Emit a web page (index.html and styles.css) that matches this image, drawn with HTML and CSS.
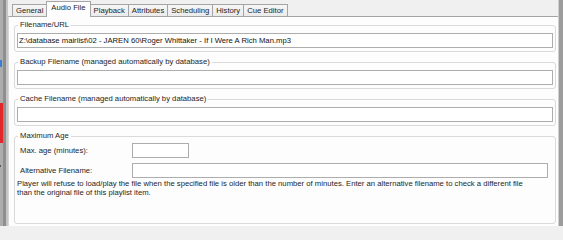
FILE: index.html
```html
<!DOCTYPE html>
<html>
<head>
<meta charset="utf-8">
<link rel="stylesheet" href="styles.css">
</head>
<body>
<div class="window">
  <div class="edge-left">
    <div class="strip">
      <div class="blue"></div>
      <div class="red"></div>
      <div class="tick"></div>
    </div>
    <div class="bar-dark"></div>
    <div class="bar-light"></div>
  </div>
  <div class="main">
    <div class="tabs">
      <div class="tab">General</div>
      <div class="tab active">Audio File</div>
      <div class="tab">Playback</div>
      <div class="tab">Attributes</div>
      <div class="tab">Scheduling</div>
      <div class="tab">History</div>
      <div class="tab">Cue Editor</div>
    </div>
    <div class="page">
      <fieldset class="group">
        <legend>Filename/URL</legend>
        <div class="input wide">Z:\database mairlist\02 - JAREN 60\Roger Whittaker - If I Were A Rich Man.mp3</div>
      </fieldset>
      <fieldset class="group">
        <legend>Backup Filename (managed automatically by database)</legend>
        <div class="input wide"></div>
      </fieldset>
      <fieldset class="group">
        <legend>Cache Filename (managed automatically by database)</legend>
        <div class="input wide"></div>
      </fieldset>
      <fieldset class="group grow">
        <legend>Maximum Age</legend>
        <div class="row first">
          <span class="label">Max. age (minutes):</span>
          <div class="input short"></div>
        </div>
        <div class="row">
          <span class="label">Alternative Filename:</span>
          <div class="input alt"></div>
        </div>
        <p class="note">Player will refuse to load/play the file when the specified file is older than the number of minutes. Enter an alternative filename to check a different file than the original file of this playlist item.</p>
      </fieldset>
    </div>
  </div>
  <div class="edge-right"></div>
</div>
</body>
</html>
```

FILE: styles.css
```css
* { box-sizing: border-box; }

html, body {
  margin: 0;
  padding: 0;
  width: 563px;
  height: 226px;
  overflow: hidden;
  background: #f0f0f0;
  font-family: "Liberation Sans", Arial, sans-serif;
  font-size: 7.7px;
  color: #1e1e1e;
}

.window {
  display: flex;
  height: 226px;
}

/* left window edge */
.edge-left {
  display: flex;
  width: 8px;
  flex: none;
}
.strip {
  width: 3px;
  background: #adadad;
  display: flex;
  flex-direction: column;
}
.blue {
  margin-top: 60px;
  height: 7px;
  width: 2px;
  background: #3a7fd5;
}
.red {
  margin-top: 36px;
  height: 40px;
  background: #e3262a;
}
.tick {
  margin-top: 22px;
  height: 2px;
  width: 1px;
  background: #555;
}
.bar-dark {
  width: 3px;
  background: #8f8f8f;
}
.bar-light {
  width: 2px;
  background: #c6c6c6;
}

.edge-right {
  width: 5px;
  flex: none;
  background: #9c9c9c;
  border-left: 1px solid #cfcfcf;
}

.main {
  flex: 1;
  display: flex;
  flex-direction: column;
  min-width: 0;
}

/* tabs */
.tabs {
  height: 16px;
  display: flex;
  align-items: flex-end;
  padding-left: 5px;
  flex: none;
}
.tab {
  height: 12px;
  line-height: 11px;
  padding: 0 3px;
  border: 1px solid #a5a5a5;
  border-bottom: none;
  margin-left: -1px;
  background: linear-gradient(#f6f6f6, #ebebeb);
  white-space: nowrap;
}
.tab.active {
  height: 16px;
  line-height: 12px;
  padding: 0 4px;
  margin-bottom: -1px;
  background: #fdfdfd;
  position: relative;
  z-index: 1;
}

/* page */
.page {
  flex: 1;
  background: #fdfdfd;
  border-top: 1px solid #a5a5a5;
  border-left: 1px solid #d6d6d6;
  padding: 0 2px 2px 5px;
  display: flex;
  flex-direction: column;
}

.group {
  margin: 5px 0 0 0;
  padding: 3px 2px 3px 2px;
  border: 1px solid #dadada;
  border-radius: 3px;
  min-width: 0;
}
.page .group:first-child { margin-top: 3px; }
.group.grow {
  flex: 1;
  padding-top: 2px;
}

legend {
  padding: 0 2px;
  margin-left: 1px;
  line-height: 10px;
  height: 10px;
}

.input {
  height: 15px;
  border: 1px solid #adadad;
  background: #fff;
  padding: 0 1px;
  line-height: 13px;
  white-space: nowrap;
  overflow: hidden;
  color: #111;
}
.input.short { width: 57px; }
.input.alt { flex: 1; margin-right: 5px; }

.row {
  display: flex;
  align-items: center;
  margin-top: 5px;
}
.row.first { margin-top: 0; }
.label {
  width: 115px;
  flex: none;
  padding-left: 3px;
}

.note {
  margin: 1px 26px 0 0;
  line-height: 9px;
}
```
